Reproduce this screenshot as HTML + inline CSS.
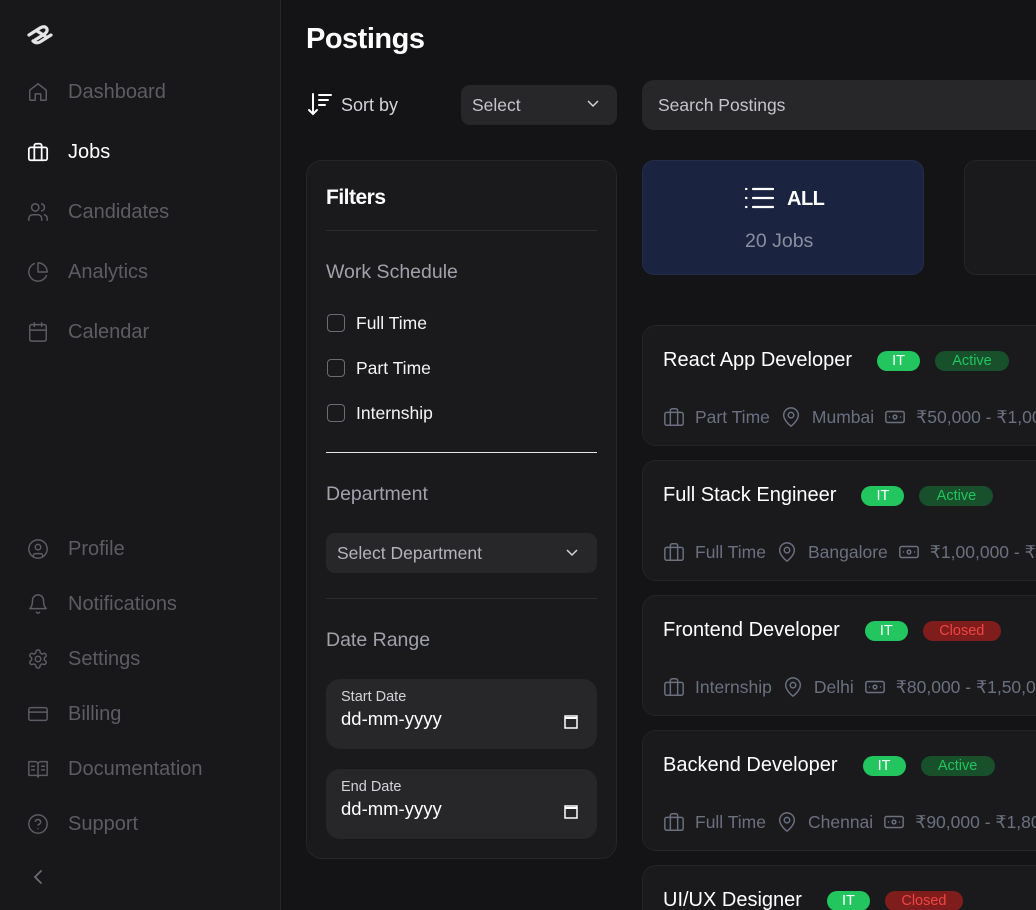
<!DOCTYPE html>
<html style="width:1036px;height:910px;overflow:hidden"><head><meta charset="utf-8"><style>
*{box-sizing:border-box;margin:0;padding:0}
body{width:1036px;height:910px;overflow:hidden;background:#141416;font-family:"Liberation Sans",sans-serif;position:relative;color:#fff}
.sb{position:absolute;left:0;top:0;width:281px;height:910px;background:#18181b;border-right:1px solid #26262a}
.ni{position:absolute;left:27px;display:flex;align-items:center;font-size:20px;color:#5c5c62;height:24px}
.ni svg{width:22px;height:22px;margin-right:19px;stroke:currentColor;fill:none;stroke-width:1.6;stroke-linecap:round;stroke-linejoin:round}
.abs{position:absolute}
.card{position:absolute;background:#1a1a1d;border:1px solid #252528;border-radius:14px}
.hr{position:absolute;left:326px;width:271px;height:1px;background:#2c2c30}
.cb{position:absolute;left:327px;width:18px;height:18px;border:1.5px solid #6b6b72;border-radius:4px}
.cl{position:absolute;left:356px;font-size:17.5px;color:#f4f4f5}
.sel{position:absolute;background:#27272a;border-radius:9px;color:#a1a1aa;font-size:17.5px;display:flex;align-items:center;padding-left:11px}
.jc{position:absolute;left:642px;width:420px;height:121px;background:#1a1a1d;border:1px solid #242427;border-radius:14px;overflow:hidden}
.jt{position:absolute;left:20px;top:23px;font-size:20px;color:#fff;display:flex;align-items:center;white-space:nowrap}
.b{display:inline-block;height:20px;line-height:20px;border-radius:10px;font-size:14.5px;text-align:center}
.it{background:#22c55e;color:#fff;width:43px;margin-left:25px}
.ac{background:#18502c;color:#22c55e;width:74px;margin-left:15px}
.cl2{background:#7f1d1d;color:#ef4444;width:78px;margin-left:15px}
.jm{position:absolute;left:20px;top:80px;font-size:17.5px;color:#6b7080;display:flex;align-items:center;white-space:nowrap}
.jm svg{width:22px;height:22px;stroke:#6b7080;fill:none;stroke-width:1.6;stroke-linecap:round;stroke-linejoin:round;margin-right:10px}
.jm span{margin-right:10px}
</style></head><body>
<div class="sb">
<svg class="abs" style="left:25px;top:23px" width="30" height="24" viewBox="0 0 30 24"><g fill="none" stroke="#e4e4e7" stroke-width="3.2" stroke-linecap="round"><path d="M4 12 L15 5 Q20 2 22 6 Q23 9 18 12 L10 17"/><path d="M12 8 L20 13 M8 18 Q11 21 15 19 L26 12"/></g></svg>
<div class="ni" style="top:80px"><svg viewBox="0 0 24 24"><path d="M3 10l9-7 9 7v10a1 1 0 0 1-1 1h-5v-7H9v7H4a1 1 0 0 1-1-1z"/></svg>Dashboard</div>
<div class="ni" style="top:140px;color:#fff"><svg viewBox="0 0 24 24" style="stroke-width:1.9"><rect x="2" y="7" width="20" height="14" rx="2"/><path d="M16 21V5a2 2 0 0 0-2-2h-4a2 2 0 0 0-2 2v16"/></svg>Jobs</div>
<div class="ni" style="top:200px"><svg viewBox="0 0 24 24"><path d="M16 21v-2a4 4 0 0 0-4-4H6a4 4 0 0 0-4 4v2"/><circle cx="9" cy="7" r="4"/><path d="M22 21v-2a4 4 0 0 0-3-3.87M16 3.13a4 4 0 0 1 0 7.75"/></svg>Candidates</div>
<div class="ni" style="top:260px"><svg viewBox="0 0 24 24"><path d="M21.2 15.9A10 10 0 1 1 8 2.8"/><path d="M22 12A10 10 0 0 0 12 2v10z"/></svg>Analytics</div>
<div class="ni" style="top:320px"><svg viewBox="0 0 24 24"><rect x="3" y="4" width="18" height="18" rx="2"/><path d="M16 2v4M8 2v4M3 10h18"/></svg>Calendar</div>
<div class="ni" style="top:537px"><svg viewBox="0 0 24 24"><circle cx="12" cy="12" r="10"/><circle cx="12" cy="10" r="3"/><path d="M7 20.7V19a2 2 0 0 1 2-2h6a2 2 0 0 1 2 2v1.7"/></svg>Profile</div>
<div class="ni" style="top:592px"><svg viewBox="0 0 24 24"><path d="M6 8a6 6 0 0 1 12 0c0 7 3 9 3 9H3s3-2 3-9M10.3 21a1.94 1.94 0 0 0 3.4 0"/></svg>Notifications</div>
<div class="ni" style="top:647px"><svg viewBox="0 0 24 24"><path d="M12.2 2h-.4a2 2 0 0 0-2 2v.2a2 2 0 0 1-1 1.7l-.4.3a2 2 0 0 1-2 0l-.2-.1a2 2 0 0 0-2.7.7l-.2.4a2 2 0 0 0 .7 2.7l.2.1a2 2 0 0 1 1 1.7v.5a2 2 0 0 1-1 1.7l-.2.1a2 2 0 0 0-.7 2.7l.2.4a2 2 0 0 0 2.7.7l.2-.1a2 2 0 0 1 2 0l.4.3a2 2 0 0 1 1 1.7v.2a2 2 0 0 0 2 2h.4a2 2 0 0 0 2-2v-.2a2 2 0 0 1 1-1.7l.4-.3a2 2 0 0 1 2 0l.2.1a2 2 0 0 0 2.7-.7l.2-.4a2 2 0 0 0-.7-2.7l-.2-.1a2 2 0 0 1-1-1.7v-.5a2 2 0 0 1 1-1.7l.2-.1a2 2 0 0 0 .7-2.7l-.2-.4a2 2 0 0 0-2.7-.7l-.2.1a2 2 0 0 1-2 0l-.4-.3a2 2 0 0 1-1-1.7V4a2 2 0 0 0-2-2z"/><circle cx="12" cy="12" r="3"/></svg>Settings</div>
<div class="ni" style="top:702px"><svg viewBox="0 0 24 24"><rect x="2" y="5" width="20" height="14" rx="2"/><path d="M2 10h20"/></svg>Billing</div>
<div class="ni" style="top:757px"><svg viewBox="0 0 24 24"><path d="M2 4h7a3 3 0 0 1 3 3v14a2 2 0 0 0-2-2H2zM22 4h-7a3 3 0 0 0-3 3v14a2 2 0 0 1 2-2h8z"/><path d="M5 9h3M5 13h3M16 9h3M16 13h3"/></svg>Documentation</div>
<div class="ni" style="top:812px"><svg viewBox="0 0 24 24"><circle cx="12" cy="12" r="10"/><path d="M9.1 9a3 3 0 0 1 5.8 1c0 2-3 3-3 3M12 17h.01"/></svg>Support</div>
<svg class="abs" style="left:30px;top:867px" width="16" height="20" viewBox="0 0 16 20"><path d="M11 4l-6 6 6 6" fill="none" stroke="#6b6b72" stroke-width="1.8" stroke-linecap="round"/></svg>
</div>

<div class="abs" style="left:306px;top:23px;font-size:29px;font-weight:bold;letter-spacing:-0.5px">Postings</div>
<svg class="abs" style="left:307px;top:92px" width="28" height="26" viewBox="0 0 28 26"><g fill="none" stroke="#fff" stroke-width="2" stroke-linecap="round"><path d="M6 2v20M2 18l4 4 4-4M12 3h12M12 8h9M12 13h6"/></g></svg>
<div class="abs" style="left:341px;top:95px;font-size:18px;color:#d4d4d8">Sort by</div>
<div class="sel" style="left:461px;top:85px;width:156px;height:40px;color:#c4c4ca">Select<svg class="abs" style="right:18px;top:15px" width="12" height="8" viewBox="0 0 12 8"><path d="M1 1l5 5 5-5" fill="none" stroke="#d4d4d8" stroke-width="1.5"/></svg></div>
<div class="sel" style="left:642px;top:80px;width:420px;height:50px;border-radius:12px;padding-left:16px;color:#c4c4ca">Search Postings</div>

<div class="card" style="left:306px;top:160px;width:311px;height:699px;border-radius:16px"></div>
<div class="abs" style="left:326px;top:186px;font-size:21px;font-weight:bold;letter-spacing:-0.5px">Filters</div>
<div class="hr" style="top:230px"></div>
<div class="abs" style="left:326px;top:261px;font-size:19.5px;color:#a1a1aa">Work Schedule</div>
<div class="cb" style="top:314px"></div><div class="cl" style="top:313px">Full Time</div>
<div class="cb" style="top:359px"></div><div class="cl" style="top:358px">Part Time</div>
<div class="cb" style="top:404px"></div><div class="cl" style="top:403px">Internship</div>
<div class="hr" style="top:452px;background:#e4e4e7"></div>
<div class="abs" style="left:326px;top:483px;font-size:19.5px;color:#a1a1aa">Department</div>
<div class="sel" style="left:326px;top:533px;width:271px;height:40px;color:#b4b4ba">Select Department<svg class="abs" style="right:19px;top:16px" width="12" height="8" viewBox="0 0 12 8"><path d="M1 1l5 5 5-5" fill="none" stroke="#d4d4d8" stroke-width="1.5"/></svg></div>
<div class="hr" style="top:598px"></div>
<div class="abs" style="left:326px;top:629px;font-size:19.5px;color:#a1a1aa">Date Range</div>
<div class="sel" style="left:326px;top:679px;width:271px;height:70px;border-radius:14px;display:block;padding:10px 0 0 15px"><div style="font-size:14.5px;color:#d4d4d8">Start Date</div><div style="font-size:18.5px;color:#fff;margin-top:3px">dd-mm-yyyy</div><svg class="abs" style="right:19px;top:35px" width="14" height="15" viewBox="0 0 14 15"><rect x="1" y="2" width="12" height="12" fill="none" stroke="#fff" stroke-width="1.5"/><path d="M1 4h12" stroke="#fff" stroke-width="2"/></svg></div>
<div class="sel" style="left:326px;top:769px;width:271px;height:70px;border-radius:14px;display:block;padding:10px 0 0 15px"><div style="font-size:14.5px;color:#d4d4d8">End Date</div><div style="font-size:18.5px;color:#fff;margin-top:3px">dd-mm-yyyy</div><svg class="abs" style="right:19px;top:35px" width="14" height="15" viewBox="0 0 14 15"><rect x="1" y="2" width="12" height="12" fill="none" stroke="#fff" stroke-width="1.5"/><path d="M1 4h12" stroke="#fff" stroke-width="2"/></svg></div>

<div class="abs" style="left:642px;top:160px;width:282px;height:115px;background:#1a2340;border:1px solid #232c48;border-radius:12px"></div>
<svg class="abs" style="left:744px;top:187px" width="30" height="22" viewBox="0 0 30 22"><g stroke="#fff" stroke-width="2.2" stroke-linecap="round"><path d="M2 2h.5M2 11h.5M2 20h.5M9 2h20M9 11h20M9 20h20"/></g></svg>
<div class="abs" style="left:787px;top:188px;font-size:20px;font-weight:bold;letter-spacing:-0.5px">ALL</div>
<div class="abs" style="left:745px;top:230px;font-size:19.5px;color:#8a8f9c">20 Jobs</div>
<div class="card" style="left:964px;top:160px;width:120px;height:115px;border-radius:12px"></div>

<div class="jc" style="top:325px"><div class="jt">React App Developer<span class="b it">IT</span><span class="b ac">Active</span></div>
<div class="jm"><svg viewBox="0 0 24 24"><rect x="2" y="7" width="20" height="14" rx="2"/><path d="M16 21V5a2 2 0 0 0-2-2h-4a2 2 0 0 0-2 2v16"/></svg><span>Part Time</span><svg viewBox="0 0 24 24"><path d="M20 10c0 6-8 12-8 12s-8-6-8-12a8 8 0 0 1 16 0z"/><circle cx="12" cy="10" r="3"/></svg><span>Mumbai</span><svg viewBox="0 0 24 24"><rect x="2" y="6" width="20" height="12" rx="2"/><circle cx="12" cy="12" r="2"/><path d="M6 12h.01M18 12h.01"/></svg><span>₹50,000 - ₹1,00,000</span></div></div>

<div class="jc" style="top:460px"><div class="jt">Full Stack Engineer<span class="b it">IT</span><span class="b ac">Active</span></div>
<div class="jm"><svg viewBox="0 0 24 24"><rect x="2" y="7" width="20" height="14" rx="2"/><path d="M16 21V5a2 2 0 0 0-2-2h-4a2 2 0 0 0-2 2v16"/></svg><span>Full Time</span><svg viewBox="0 0 24 24"><path d="M20 10c0 6-8 12-8 12s-8-6-8-12a8 8 0 0 1 16 0z"/><circle cx="12" cy="10" r="3"/></svg><span>Bangalore</span><svg viewBox="0 0 24 24"><rect x="2" y="6" width="20" height="12" rx="2"/><circle cx="12" cy="12" r="2"/><path d="M6 12h.01M18 12h.01"/></svg><span>₹1,00,000 - ₹2,00,000</span></div></div>

<div class="jc" style="top:595px"><div class="jt">Frontend Developer<span class="b it">IT</span><span class="b cl2">Closed</span></div>
<div class="jm"><svg viewBox="0 0 24 24"><rect x="2" y="7" width="20" height="14" rx="2"/><path d="M16 21V5a2 2 0 0 0-2-2h-4a2 2 0 0 0-2 2v16"/></svg><span>Internship</span><svg viewBox="0 0 24 24"><path d="M20 10c0 6-8 12-8 12s-8-6-8-12a8 8 0 0 1 16 0z"/><circle cx="12" cy="10" r="3"/></svg><span>Delhi</span><svg viewBox="0 0 24 24"><rect x="2" y="6" width="20" height="12" rx="2"/><circle cx="12" cy="12" r="2"/><path d="M6 12h.01M18 12h.01"/></svg><span>₹80,000 - ₹1,50,000</span></div></div>

<div class="jc" style="top:730px"><div class="jt">Backend Developer<span class="b it">IT</span><span class="b ac">Active</span></div>
<div class="jm"><svg viewBox="0 0 24 24"><rect x="2" y="7" width="20" height="14" rx="2"/><path d="M16 21V5a2 2 0 0 0-2-2h-4a2 2 0 0 0-2 2v16"/></svg><span>Full Time</span><svg viewBox="0 0 24 24"><path d="M20 10c0 6-8 12-8 12s-8-6-8-12a8 8 0 0 1 16 0z"/><circle cx="12" cy="10" r="3"/></svg><span>Chennai</span><svg viewBox="0 0 24 24"><rect x="2" y="6" width="20" height="12" rx="2"/><circle cx="12" cy="12" r="2"/><path d="M6 12h.01M18 12h.01"/></svg><span>₹90,000 - ₹1,80,000</span></div></div>

<div class="jc" style="top:865px;height:45px;border-bottom:none;border-radius:14px 14px 0 0"><div class="jt">UI/UX Designer<span class="b it">IT</span><span class="b cl2">Closed</span></div></div>
</body></html>
